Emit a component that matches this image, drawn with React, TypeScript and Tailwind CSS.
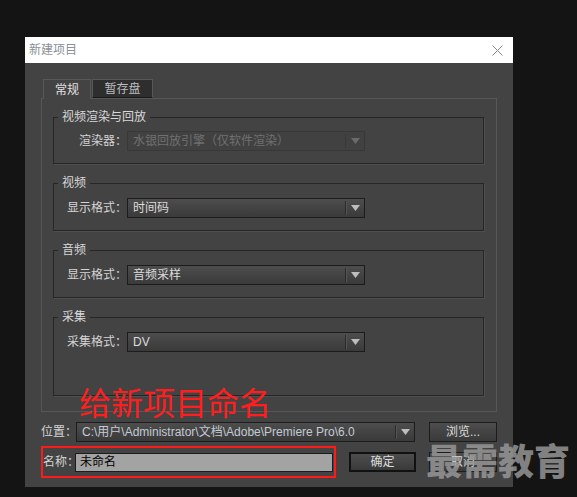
import React from 'react';

const FONT = { fontFamily: '"Liberation Sans", "Noto Sans CJK SC", sans-serif' };

function Arrow() {
  return (
    <div className="flex h-full w-[19px] items-center justify-center border-l border-[#2a2a2a] shadow-[inset_1px_0_0_#555]">
      <svg width="9" height="6" viewBox="0 0 9 6">
        <path d="M0 0h9L4.5 6z" fill="#bdbdbd" />
      </svg>
    </div>
  );
}

function Dropdown({ value, width, disabled = false, tone = 'text-[#dcdcdc]' }: { value: string; width: string; disabled?: boolean; tone?: string }) {
  if (disabled) {
    return (
      <div className={`flex h-[20px] shrink-0 ${width} items-center border border-[#383838] bg-[#414141]`}>
        <span className="flex-1 truncate pl-[5px] text-[12px] text-[#707070]">{value}</span>
        <div className="flex h-[14px] w-[19px] items-center justify-center border-l border-[#383838]">
          <svg width="9" height="6" viewBox="0 0 9 6">
            <path d="M0 0h9L4.5 6z" fill="#6a6a6a" />
          </svg>
        </div>
      </div>
    );
  }
  return (
    <div className={`flex h-[20px] shrink-0 ${width} items-center border border-[#1c1c1c] bg-gradient-to-b from-[#4d4d4d] to-[#3a3a3a]`}>
      <span className={`flex-1 truncate pl-[5px] text-[12px] ${tone}`}>{value}</span>
      <div className="h-[14px]">
        <Arrow />
      </div>
    </div>
  );
}

function Group({ title, label, value, disabled, pb = 'pb-[12px]', pt = 'pt-[6px]' }: { title: string; label: string; value: string; disabled?: boolean; pb?: string; pt?: string }) {
  return (
    <fieldset className={`shrink-0 border border-[#262626] shadow-[1px_1px_0_#4f4f4f] ${pt} ${pb}`}>
      <legend className="ml-[4px] px-[4px] text-[12px] leading-[16px] text-[#d8d8d8]">{title}</legend>
      <div className="flex items-center">
        <span className="w-[73px] shrink-0 whitespace-nowrap text-right text-[12px] text-[#d4d4d4]">{label}</span>
        <Dropdown value={value} width="w-[238px]" disabled={disabled} />
      </div>
    </fieldset>
  );
}

function Btn({ children, primary = false }: { children: React.ReactNode; primary?: boolean }) {
  return (
    <div
      className={`flex h-[20px] shrink-0 items-center justify-center whitespace-nowrap bg-gradient-to-b from-[#4d4d4d] to-[#3a3a3a] text-[12px] text-[#dcdcdc] ${
        primary ? 'w-[67px] border-2 border-[#111]' : 'w-[68px] border border-[#1c1c1c]'
      }`}
    >
      {children}
    </div>
  );
}

export default function App() {
  return (
    <div className="relative h-[497px] w-[577px] overflow-hidden bg-[#141414] pl-[25px] pt-[37px]" style={FONT}>
      <div className="flex h-[450px] w-[488px] flex-col">
        {/* title bar */}
        <div className="flex h-[26px] shrink-0 items-center justify-between bg-white pl-[4px] pr-[10px]">
          <span className="text-[12px] text-[#8a8f96]">新建项目</span>
          <svg width="11" height="11" viewBox="0 0 11 11" stroke="#8a8a8a" strokeWidth="1">
            <path d="M0.5 0.5l10 10M10.5 0.5l-10 10" />
          </svg>
        </div>

        <div className="flex flex-1 flex-col bg-[#434343] px-[16px] pt-[16px]">
          {/* tabs */}
          <div className="ml-[2px] flex h-[19px] shrink-0 items-end gap-[1px]">
            <div className="relative z-10 -mb-px flex h-[20px] w-[48px] items-center justify-center border border-b-0 border-[#575757] bg-[#434343] text-[12px] text-[#e0e0e0]">
              常规
            </div>
            <div className="flex h-[19px] w-[61px] items-center justify-center border border-[#575757] border-b-[#1a1a1a] bg-[#2e2e2e] text-[12px] text-[#bdbdbd]">
              暂存盘
            </div>
          </div>

          {/* panel */}
          <div className="flex h-[314px] shrink-0 flex-col gap-[11px] border border-[#575757] pl-[11px] pr-[12px] pt-[10px]">
            <Group title="视频渲染与回放" label="渲染器：" value="水银回放引擎（仅软件渲染）" disabled />
            <Group title="视频" label="显示格式：" value="时间码" pt="pt-[7px]" />
            <Group title="音频" label="显示格式：" value="音频采样" pt="pt-[7px]" />
            <Group title="采集" label="采集格式：" value="DV" pt="pt-[7px]" pb="pb-[43px]" />
          </div>

          {/* location */}
          <div className="mt-[10px] flex shrink-0 items-center">
            <span className="w-[35px] shrink-0 whitespace-nowrap text-[12px] text-[#d4d4d4]">位置：</span>
            <Dropdown
              value="C:\用户\Administrator\文档\Adobe\Premiere Pro\6.0"
              width="w-[339px]"
              tone="text-[#c2cad3]"
            />
            <div className="ml-[14px]">
              <Btn>浏览...</Btn>
            </div>
          </div>

          {/* name */}
          <div className="mt-[10px] flex shrink-0 items-center">
            <span className="w-[34px] shrink-0 whitespace-nowrap pl-[2px] text-[12px] text-[#d4d4d4]">名称：</span>
            <div className="flex h-[19px] w-[258px] shrink-0 items-center border border-[#1c1c1c] bg-[#a3a3a3] pl-[4px] text-[12px] text-black">
              未命名
            </div>
            <div className="ml-[16px]">
              <Btn primary>确定</Btn>
            </div>
            <div className="ml-[13px]">
              <Btn>取消</Btn>
            </div>
          </div>
        </div>
      </div>

      {/* annotation overlays */}
      <div className="absolute left-[79px] top-[384px] text-[32px] leading-[34px] text-[#ff1e1e]" style={{ fontFamily: '"Noto Sans CJK SC", sans-serif' }}>
        给新项目命名
      </div>
      <div className="absolute left-[41px] top-[446px] h-[32px] w-[295px] border-2 border-[#ff1a1a]" />
      <div
        className="absolute left-[426px] top-[440px] text-[36px] font-black leading-[38px] text-[rgba(150,150,150,0.85)]"
        style={{ fontFamily: '"Noto Sans CJK SC", sans-serif' }}
      >
        最需教育
      </div>
    </div>
  );
}
